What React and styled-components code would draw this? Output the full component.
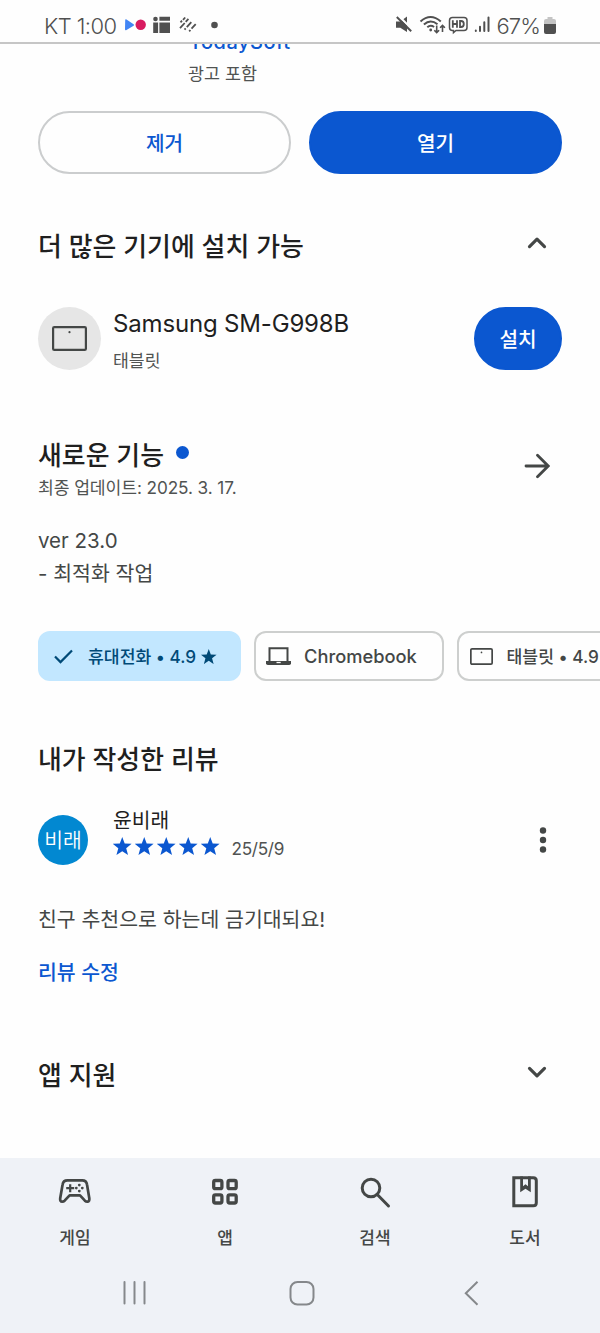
import React from "react";
import styled, { createGlobalStyle } from "styled-components";

const GlobalStyle = createGlobalStyle`
  * { box-sizing: border-box; }
  body { margin: 0; background: #fefefe; overflow: hidden; }
  button { font: inherit; padding: 0; border: 0; background: none; }
  svg { display: block; flex: none; }
`;

const Screen = styled.div`
  width: 600px;
  height: 1333px;
  display: flex;
  flex-direction: column;
  overflow: hidden;
  background: #fefefe;
  color: #444746;
  font-family: Inter, "Noto Sans CJK KR", sans-serif;
  white-space: nowrap;
`;

const StatusBar = styled.header`
  flex: none;
  height: 44px;
  padding: 8px 44px 0 44px;
  border-bottom: 2px solid #c6c6c6;
  display: flex;
  justify-content: space-between;
  align-items: flex-start;
`;

const StatusGroup = styled.div`
  display: flex;
  align-items: center;
  height: 34px;
  gap: ${(p) => p.$gap || 0}px;
`;

const StatusText = styled.span`
  padding-top: 1px;
  font-size: 22px;
  font-weight: 350;
  line-height: 34px;
  letter-spacing: ${(p) => p.$spacing || 0}px;
  color: #505050;
`;

const Content = styled.main`
  flex: none;
  height: 1114px;
  overflow: hidden;
  padding: 0 38px;
`;

const AppInfo = styled.div`
  display: flex;
  flex-direction: column;
  gap: 4px;
  height: 67px;
  padding-left: 150px;
`;

const Developer = styled.div`
  flex: none;
  margin-top: -16px;
  height: 28px;
  line-height: 28px;
  font-size: 20px;
  font-weight: 500;
  letter-spacing: 0.5px;
  padding-left: 1px;
  color: #0b57d0;
`;

const Caption = styled.div`
  font-size: ${(p) => p.$size || 17.2}px;
  line-height: 28px;
  padding-top: ${(p) => p.$top || 0}px;
  letter-spacing: ${(p) => p.$spacing || 0}px;
  color: #505352;
`;

const Actions = styled.div`
  display: flex;
  gap: 18px;
`;

const ActionButton = styled.button`
  flex: ${(p) => (p.$width ? "none" : "1")};
  width: ${(p) => (p.$width ? `${p.$width}px` : "auto")};
  height: 63px;
  border-radius: 32px;
  border: 2px solid ${(p) => (p.$filled ? "#0b57d0" : "#cbcdce")};
  background: ${(p) => (p.$filled ? "#0b57d0" : "#fefefe")};
  color: ${(p) => (p.$filled ? "#fff" : "#0b57d0")};
  font-size: 20.2px;
  font-weight: 500;
  line-height: 56px;
  padding-top: 3px;
`;

const SectionHeader = styled.div`
  display: flex;
  justify-content: space-between;
  align-items: center;
  height: 40px;
  margin-top: ${(p) => p.$top}px;
  padding-right: 15px;
`;

const Title = styled.h2`
  margin: 0;
  padding-top: 8px;
  font-size: 25.9px;
  line-height: 40px;
  font-weight: 500;
  color: #1f1f1f;
`;

const DeviceRow = styled.div`
  display: flex;
  align-items: center;
  height: 63px;
  margin-top: 44px;
`;

const DeviceBadge = styled.div`
  width: 63px;
  height: 63px;
  margin-right: 12px;
  border-radius: 50%;
  background: #e6e6e6;
  display: grid;
  place-items: center;
`;

const DeviceText = styled.div`
  flex: 1;
  margin-top: 3px;
`;

const DeviceName = styled.div`
  font-size: 24px;
  line-height: 38px;
  letter-spacing: -0.17px;
  color: #1f1f1f;
`;

const NewsHeader = styled.div`
  display: flex;
  justify-content: space-between;
  align-items: flex-start;
  height: 68px;
  margin-top: 63px;
`;

const TitleLine = styled.div`
  display: flex;
  align-items: center;
  gap: 12px;
  height: 38px;
`;

const NewDot = styled.i`
  width: 13px;
  height: 13px;
  border-radius: 50%;
  margin-top: 1px;
  background: #0b57d0;
`;

const ArrowSlot = styled.div`
  padding: 20px 12px 0 0;
`;

const BodyText = styled.p`
  margin: ${(p) => p.$top || 0}px 0 0;
  font-size: 20.5px;
  line-height: 33px;
  color: #444746;
`;

const Chips = styled.div`
  display: flex;
  gap: 13px;
  margin-top: 41px;
  width: 562px;
  overflow: hidden;
`;

const Chip = styled.div`
  flex: none;
  width: ${(p) => p.$width}px;
  height: 50px;
  padding-left: ${(p) => p.$pad || 11}px;
  display: flex;
  align-items: center;
  gap: ${(p) => p.$gap}px;
  border-radius: 12px;
  border: 2px solid ${(p) => (p.$selected ? "#c2e7ff" : "#cdcfce")};
  background: ${(p) => (p.$selected ? "#c2e7ff" : "#fefefe")};
  color: ${(p) => (p.$selected ? "#004a77" : "#444746")};
`;

const ChipLabel = styled.span`
  display: flex;
  align-items: center;
  gap: 5px;
  padding-top: ${(p) => p.$top || 0}px;
  font-size: ${(p) => p.$size || 17.2}px;
  font-weight: 500;
  line-height: 26px;
`;

const ReviewRow = styled.div`
  display: flex;
  align-items: center;
  height: 60px;
  margin-top: 34px;
  padding-right: 14px;
`;

const Avatar = styled.div`
  width: 50px;
  height: 50px;
  border-radius: 50%;
  background: #0288d1;
  color: #fff;
  font-size: 20.4px;
  font-weight: 350;
  line-height: 51px;
  text-align: center;
`;

const Reviewer = styled.div`
  flex: 1;
  padding: 0 0 12px 25px;
`;

const ReviewerName = styled.div`
  font-size: 20.4px;
  line-height: 29px;
  color: #1f1f1f;
`;

const Rating = styled.div`
  display: flex;
  align-items: center;
  height: 28px;
`;

const Stars = styled.div`
  display: flex;
  gap: 3.5px;
  margin: -5px 12px 0 0;
  color: #0b57d0;
`;

const EditLink = styled.a`
  display: block;
  margin-top: 21px;
  font-size: 20.5px;
  font-weight: 500;
  line-height: 32px;
  color: #0b57d0;
`;

const BottomNav = styled.nav`
  flex: none;
  height: 97px;
  display: grid;
  grid-template-columns: repeat(4, 1fr);
  background: #eff2f7;
`;

const NavItem = styled.div`
  display: flex;
  flex-direction: column;
  align-items: center;
  padding-top: 15px;
  gap: 16px;
  font-size: 17px;
  font-weight: 500;
  line-height: 26px;
`;

const SystemNav = styled.div`
  flex: 1;
  display: flex;
  justify-content: space-between;
  align-items: flex-start;
  padding: 26px 121px 0 122px;
  background: #eff2f7;
`;

const HomeKey = styled.div`
  margin-right: 8px;
`;

const Star = ({ size = 18.5 }) => (
  <svg width={size} height={size} viewBox="1 1 22 22" fill="currentColor">
    <path d="M12 1l2.900 7.700 8.200.4-6.400 5.200 2.200 8.100-6.900-4.600-6.900 4.600 2.200-8.100L.9 9.100l8.200-.4z" />
  </svg>
);

const Tablet = ({ width, height, stroke }) => (
  <svg width={width} height={height} viewBox={`0 0 ${width} ${height}`} fill="none" stroke="#444746" strokeWidth={stroke}>
    <rect x={stroke / 2} y={stroke / 2} width={width - stroke} height={height - stroke} rx="1.2" />
    <circle cx={width / 2} cy={stroke + height * 0.16} r={stroke / 2} fill="#444746" stroke="none" />
  </svg>
);

const Chevron = ({ up }) => (
  <svg width="20" height="14" viewBox="0 0 20 14" fill="none" stroke="#444746" strokeWidth="3.2" strokeLinecap="round" strokeLinejoin="round">
    <path d={up ? "M2.5 10.6L10 3.2l7.500 7.400" : "M2.500 3.400l7.500 7.400 7.500-7.400"} />
  </svg>
);

const NotificationIcons = () => (
  <svg width="96" height="18" viewBox="0 0 96 18" fill="#505050">
    <path d="M1.2 4.3Q1.2 3 2.5 3.5L9.6 8.2Q10.7 9 9.6 9.8L2.5 14Q1 14.7 1 13.3z" fill="#4285f4" />
    <circle cx="16.7" cy="8.8" r="5.2" fill="#d81b60" />
    <circle cx="31.5" cy="3" r="2.3" />
    <path d="M35.4.8H46v4H35.4zM29.2 6.5h4.900V17h-4.900zM35.4 6.5H46V17H35.4z" />
    <g stroke="#505050" strokeWidth="1.8" fill="none">
      <path d="M56.500 6.300l1.500-1.600M59 3.900l2.200-2.400M56 12.200l4.700-5.200M61.700 5.900l2.700-3M60.500 13.700l1.200-1.300M62.800 11.200l4.500-5M65.200 15.300l1.200-1.300M67.500 12.700l4.200-4.600" />
    </g>
    <circle cx="90.5" cy="9" r="3.3" />
  </svg>
);

const StatusIcons = () => (
  <svg width="98" height="20" viewBox="0 0 98 20" fill="none" stroke="#505050">
    <path d="M1 6.500h4.300L12 1.500v15.500l-6.700-4.300H1z" fill="#505050" stroke="none" />
    <path d="M3 .2L18.500 15.700" stroke="#fefefe" strokeWidth="2.200" />
    <path d="M1.800 2L16.200 16.300" strokeWidth="2" />
    <g strokeWidth="2">
      <path d="M25.500 6.400Q35.500-2.500 45.800 6.400M28.900 9.500Q35.500 3.700 42.500 9.300M32.300 12.300Q35.500 9.400 39.100 12" />
    </g>
    <circle cx="35.700" cy="15" r="1.400" fill="#505050" stroke="none" />
    <path d="M41.700 10.500v7M39.300 15.200l2.400 2.400 2.400-2.400M47.500 17V10.300M45.100 12.800l2.400-2.400 2.400 2.400" strokeWidth="1.600" />
    <path d="M57.500 2.500H69q3 0 3 3v7q0 3-3 3h-8l-2.500 2.200v-2.200h-1q-3 0-3-3v-7q0-3 3-3z" strokeWidth="1.500" />
    <path d="M57.800 5.200v7.600M62 5.200v7.600M57.800 9H62M65 6v6h1q2.800 0 2.800-3T66 6z" strokeWidth="1.800" />
    <g strokeWidth="2" strokeLinecap="round">
      <path d="M80.800 15.600v.5M85 11.800v4.300M89.300 7.300v8.800M93.500 2.500v13.600" />
    </g>
  </svg>
);

const Battery = () => (
  <svg width="12" height="17" viewBox="0 0 12 17">
    <path d="M3.5 0h5v2H10q2 0 2 2v4H0V4q0-2 2-2h1.5z" fill="#c4c4c4" />
    <path d="M0 7h12v8q0 2-2 2H2q-2 0-2-2z" fill="#505050" />
  </svg>
);

const navItems = [
  {
    label: "게임",
    icon: (
      <svg width="36" height="36" viewBox="0 0 36 36" fill="none" stroke="#444746" strokeWidth="2.7" strokeLinejoin="round">
        <path d="M10.4 7.3h14.8q4.2 0 4.8 4.2l2.3 13.7q.4 3.5-2 3.5-1.4 0-2.4-1L23 22.3H12.6l-5 5.4q-1 1-2.4 1-2.4 0-2-3.5l2.4-13.7q.6-4.2 4.8-4.2z" />
        <path d="M9.2 15.2h8M13.2 11.2v8" strokeWidth="2.2" />
        <g fill="#444746" stroke="none">
          <circle cx="22.3" cy="12.1" r="1.4" />
          <circle cx="19.3" cy="15.1" r="1.4" />
          <circle cx="25.3" cy="15.1" r="1.4" />
          <circle cx="22.3" cy="18.1" r="1.4" />
        </g>
      </svg>
    ),
  },
  {
    label: "앱",
    icon: (
      <svg width="36" height="36" viewBox="0 0 36 36" fill="none" stroke="#444746" strokeWidth="3.3">
        <rect x="6.7" y="7.500" width="8.200" height="8.200" rx="1.700" />
        <rect x="21" y="7.500" width="8.200" height="8.200" rx="1.700" />
        <rect x="6.700" y="21.800" width="8.200" height="8.200" rx="1.700" />
        <rect x="21" y="21.800" width="8.200" height="8.200" rx="1.700" />
      </svg>
    ),
  },
  {
    label: "검색",
    icon: (
      <svg width="36" height="36" viewBox="0 0 36 36" fill="none" stroke="#444746" strokeWidth="3">
        <circle cx="14" cy="15" r="8.800" />
        <path d="M20 21.300L31.500 33" strokeLinecap="round" />
      </svg>
    ),
  },
  {
    label: "도서",
    icon: (
      <svg width="36" height="36" viewBox="0 0 36 36" fill="none" stroke="#444746" strokeWidth="3">
        <path d="M6.800 4.800h19.500q3 0 3 3v22q0 3-3 3H6.800z" />
        <path d="M13.200 3.500v15.800l5.300-3.600 5.300 3.600V3.500h-2.800v9.700l-2.500-2-2.500 2V3.500z" fill="#444746" stroke="none" />
      </svg>
    ),
  },
];

export default function App() {
  return (
    <Screen>
      <GlobalStyle />
      <StatusBar>
        <StatusGroup $gap={7}>
          <StatusText $spacing={-0.55}>KT 1:00</StatusText>
          <NotificationIcons />
        </StatusGroup>
        <StatusGroup $gap={4}>
          <StatusIcons />
          <StatusText $spacing={-0.9}>67%</StatusText>
          <Battery />
        </StatusGroup>
      </StatusBar>

      <Content>
        <AppInfo>
          <Developer>TodaySoft</Developer>
          <Caption $size={17.4}>광고 포함</Caption>
        </AppInfo>

        <Actions>
          <ActionButton>제거</ActionButton>
          <ActionButton $filled>열기</ActionButton>
        </Actions>

        <SectionHeader $top={49}>
          <Title>더 많은 기기에 설치 가능</Title>
          <Chevron up />
        </SectionHeader>

        <DeviceRow>
          <DeviceBadge>
            <Tablet width={35} height={25} stroke={2.2} />
          </DeviceBadge>
          <DeviceText>
            <DeviceName>Samsung SM-G998B</DeviceName>
            <Caption $top={4}>태블릿</Caption>
          </DeviceText>
          <ActionButton $filled $width={88}>설치</ActionButton>
        </DeviceRow>

        <NewsHeader>
          <div>
            <TitleLine>
              <Title>새로운 기능</Title>
              <NewDot />
            </TitleLine>
            <Caption $top={3} $spacing={-0.1}>최종 업데이트: 2025. 3. 17.</Caption>
          </div>
          <ArrowSlot>
            <svg width="26" height="26" viewBox="0 0 26 26" fill="none" stroke="#444746" strokeWidth="2.800">
              <path d="M2 13h22M13.500 2.200L24.200 13 13.500 23.800" strokeLinecap="round" />
            </svg>
          </ArrowSlot>
        </NewsHeader>

        <BodyText $top={23}>ver 23.0</BodyText>
        <BodyText>- 최적화 작업</BodyText>

        <Chips>
          <Chip $selected $width={202.5} $pad={13.5} $gap={15.5}>
            <svg width="19" height="15" viewBox="0 0 19 15" fill="none" stroke="currentColor" strokeWidth="2.200">
              <path d="M1 7.500l5.500 5.600L18 1.500" />
            </svg>
            <ChipLabel $top={1}>
              휴대전화 • 4.9
              <Star size={15.5} />
            </ChipLabel>
          </Chip>
          <Chip $width={190} $pad={10.5} $gap={13}>
            <svg width="25" height="18" viewBox="0 0 25 18" fill="none" stroke="#444746" strokeWidth="2">
              <path d="M3.500 14V1.200h18V14" />
              <path d="M0 14h25v2.200q0 1.800-1.800 1.800H1.800Q0 18 0 16.200z" fill="#444746" stroke="none" />
              <path d="M10.500 15.500h4.200" stroke="#fefefe" strokeWidth="1.300" />
            </svg>
            <ChipLabel $size={18.3}>Chromebook</ChipLabel>
          </Chip>
          <Chip $width={212} $gap={14}>
            <Tablet width={23} height={17} stroke={1.7} />
            <ChipLabel $top={1}>
              태블릿 • 4.9
              <Star size={15.5} />
            </ChipLabel>
          </Chip>
        </Chips>

        <SectionHeader $top={55}>
          <Title>내가 작성한 리뷰</Title>
        </SectionHeader>

        <ReviewRow>
          <Avatar>비래</Avatar>
          <Reviewer>
            <ReviewerName>윤비래</ReviewerName>
            <Rating>
              <Stars>
                {[1, 2, 3, 4, 5].map((n) => (
                  <Star key={n} />
                ))}
              </Stars>
              <Caption $spacing={-0.3}>25/5/9</Caption>
            </Rating>
          </Reviewer>
          <svg width="10" height="28" viewBox="0 0 10 28" fill="#444746">
            <circle cx="5" cy="4.500" r="3.200" />
            <circle cx="5" cy="14" r="3.200" />
            <circle cx="5" cy="23.500" r="3.200" />
          </svg>
        </ReviewRow>

        <BodyText $top={33}>친구 추천으로 하는데 금기대되요!</BodyText>
        <EditLink>리뷰 수정</EditLink>

        <SectionHeader $top={63}>
          <Title>앱 지원</Title>
          <Chevron />
        </SectionHeader>
      </Content>

      <BottomNav>
        {navItems.map((item) => (
          <NavItem key={item.label}>
            {item.icon}
            {item.label}
          </NavItem>
        ))}
      </BottomNav>
      <SystemNav>
        <svg width="25" height="24" viewBox="0 0 25 24" stroke="#85888b" strokeWidth="2" strokeLinecap="round">
          <path d="M2.500 1v21.500M12.500 1v21.500M22.500 1v21.500" />
        </svg>
        <HomeKey>
          <svg width="26" height="25" viewBox="0 0 26 25" fill="none" stroke="#85888b" strokeWidth="2">
            <rect x="1.500" y="1" width="23" height="22.500" rx="7" />
          </svg>
        </HomeKey>
        <svg width="15" height="25" viewBox="0 0 15 25" fill="none" stroke="#85888b" strokeWidth="2">
          <path d="M13.500.8L1.800 12.200l11.700 11.500" />
        </svg>
      </SystemNav>
    </Screen>
  );
}
